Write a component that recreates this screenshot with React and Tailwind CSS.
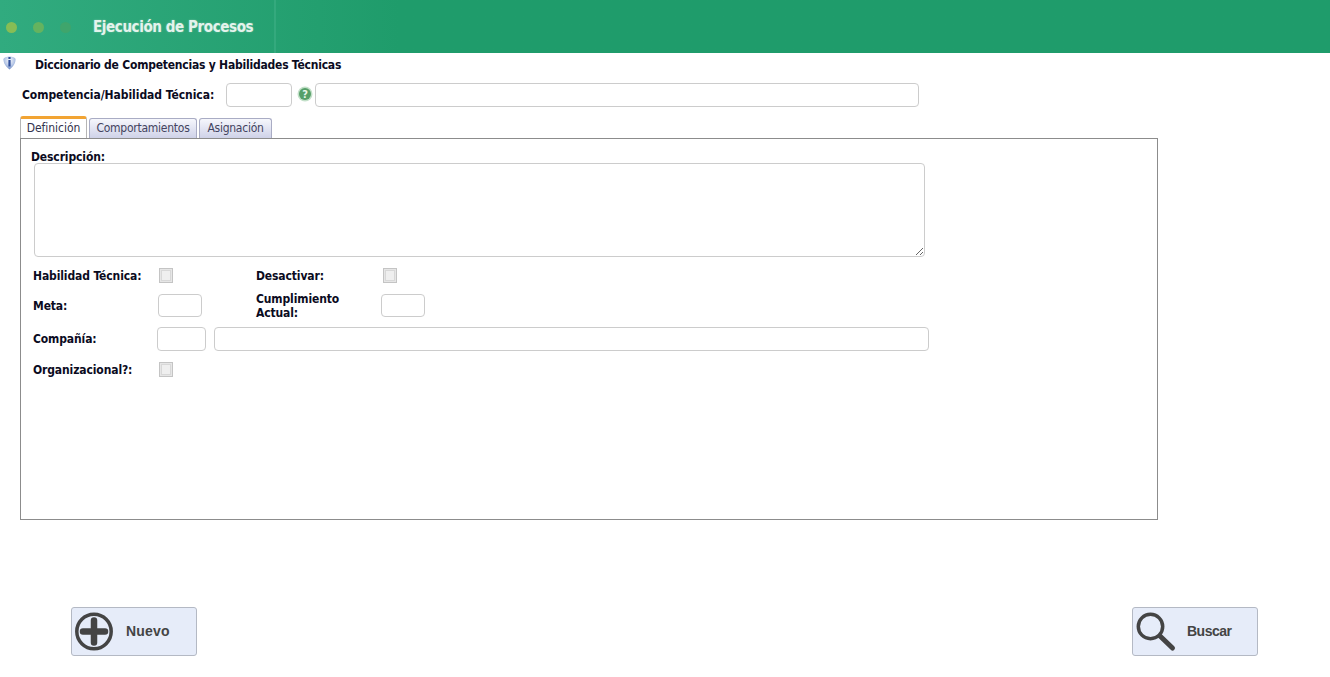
import React from "react";

function Field({ className = "" }) {
  return <div className={`h-6 rounded-[4px] border border-[#cccccc] bg-white shrink-0 ${className}`} />;
}

function Check({ className = "" }) {
  return (
    <div className={`w-[14px] h-[15px] border border-[#c4c4c4] bg-[#e6e6e6] p-[1px] shrink-0 ${className}`}>
      <div className="w-full h-full border border-[#d8d8d8] bg-[#efefef]" />
    </div>
  );
}

function Label({ className = "", children }) {
  return <div className={`text-[12px] leading-[14px] font-bold tracking-[-0.12px] text-[#0b0b1e] shrink-0 ${className}`}>{children}</div>;
}

function Tab({ active, className = "", children }) {
  return active ? (
    <div className={`h-[22px] relative border-x border-x-[#b5b5b5] border-t-[3px] border-t-[#f2a433] rounded-t-[3px] bg-white flex items-center justify-center pb-px text-[12px] tracking-[-0.05px] text-[#33334d] ${className}`}>
      {children}
    </div>
  ) : (
    <div className={`h-[20px] border border-[#a9acc4] border-b-0 rounded-t-[3px] bg-gradient-to-b from-[#f6f7fc] to-[#cfd2e8] flex items-center justify-center pb-[2px] text-[12px] tracking-[-0.25px] text-[#444460] ${className}`}>
      {children}
    </div>
  );
}

function ActionButton({ icon, label, labelClass = "" }) {
  return (
    <button className="w-[126px] h-[49px] rounded-[3px] border border-[#b4b9c4] bg-[#e6ecf9] flex items-center pl-[3px]">
      {icon}
      <span className={`text-[14px] font-bold font-['Liberation_Sans',sans-serif] text-[#444444] ${labelClass}`}>{label}</span>
    </button>
  );
}

export default function App() {
  return (
    <div className="w-[1330px] h-[677px] overflow-hidden bg-white font-['DejaVu_Sans_Condensed','Liberation_Sans',sans-serif]">
      <header className="h-[53px] bg-gradient-to-r from-[#31ab7f] via-[#1f9c6b] via-30% to-[#1f9c6b] flex">
        <div className="w-[276px] border-r-2 border-r-[#34a97d] flex items-center pl-[6px] pt-[2px]">
          <span className="w-[11px] h-[11px] rounded-full bg-[#86bd55]" />
          <span className="w-[11px] h-[11px] rounded-full bg-[#65b35f] ml-[16px]" />
          <span className="w-[11px] h-[11px] rounded-full bg-[#3fa56c] ml-[16px]" />
          <span className="ml-[22px] text-[15px] font-bold tracking-[-0.4px] text-[#e4f3ec] [text-shadow:0_0_2px_rgba(255,255,255,0.35)]">Ejecución de Procesos</span>
        </div>
      </header>

      <div className="h-[23px] flex items-center pl-[2px]">
        <svg width="15" height="14" viewBox="0 0 15 14" className="-mt-[4px]">
          <defs>
            <radialGradient id="ig" cx="50%" cy="30%" r="70%">
              <stop offset="0%" stopColor="#f5f7fc" />
              <stop offset="60%" stopColor="#b5c6e6" />
              <stop offset="100%" stopColor="#6484c2" />
            </radialGradient>
          </defs>
          <path d="M1.5 3.5 C1.5 8 4.5 11 7.5 13.5 C10.5 11 13.5 8 13.5 3.5 C13.5 1.5 10.5 0.5 7.5 0.5 C4.5 0.5 1.5 1.5 1.5 3.5Z" fill="url(#ig)" />
          <rect x="6.4" y="1" width="2.2" height="2" fill="#2f4f9a" />
          <rect x="6.4" y="4" width="2.2" height="6.5" fill="#2f4f9a" />
        </svg>
        <span className="ml-[18px] text-[12px] font-bold tracking-[-0.22px] text-[#0b0b1e]">Diccionario de Competencias y Habilidades Técnicas</span>
      </div>

      <div className="h-6 mt-[7px] flex items-center pl-[22px]">
        <Label className="w-[204px] !tracking-[-0.05px]">Competencia/Habilidad Técnica:</Label>
        <Field className="w-[66px]" />
        <svg width="16" height="16" viewBox="0 0 16 16" className="ml-[5px] -mt-[3px]">
          <circle cx="8" cy="8" r="7.5" fill="#c3e0c9" />
          <circle cx="8" cy="8" r="6" fill="#569f68" />
          <text x="8" y="12" textAnchor="middle" fontSize="11" fontWeight="700" fill="#e8f5ea">?</text>
        </svg>
        <Field className="w-[604px] ml-[2px]" />
      </div>

      <div className="pl-5 w-[1158px] mt-[9px]">
        <div className="flex items-end h-[22px] gap-[2px]">
          <Tab active className="w-[67px]">Definición</Tab>
          <Tab className="w-[108px]">Comportamientos</Tab>
          <Tab className="w-[73px]">Asignación</Tab>
        </div>
        <div className="h-[382px] border border-[#8c8c8c] pt-[11px] pl-[10px]">
          <Label>Descripción:</Label>
          <textarea className="block ml-[3px] -mt-px w-[891px] h-[94px] rounded-[4px] border border-[#cccccc] outline-none bg-white" />

          <div className="flex items-center mt-[11px] pl-[2px] h-[15px]">
            <Label className="w-[126px]">Habilidad Técnica:</Label>
            <Check />
            <Label className="ml-[83px] w-[127px]">Desactivar:</Label>
            <Check />
          </div>

          <div className="flex items-center mt-[10px] pl-[2px] h-6">
            <Label className="w-[125px] pt-[2px]">Meta:</Label>
            <Field className="w-[44px] !h-[23px]" />
            <Label className="ml-[54px] w-[125px] pt-[2px]">Cumplimiento<br />Actual:</Label>
            <Field className="w-[44px] !h-[23px]" />
          </div>

          <div className="flex items-center mt-[10px] pl-[2px] h-6">
            <Label className="w-[124px]">Compañía:</Label>
            <Field className="w-[49px]" />
            <Field className="w-[715px] ml-[8px]" />
          </div>

          <div className="flex items-center mt-[11px] pl-[2px] h-[15px]">
            <Label className="w-[126px]">Organizacional?:</Label>
            <Check />
          </div>
        </div>
      </div>

      <div className="flex justify-between pl-[71px] pr-[72px] mt-[87px]">
        <ActionButton
          label="Nuevo"
          labelClass="tracking-[0.2px]"
          icon={
            <svg width="42" height="42" viewBox="0 0 42 42" className="mr-[9px]">
              <circle cx="19" cy="20.5" r="17.2" fill="none" stroke="#444444" strokeWidth="3.5" />
              <path d="M19 9.5 V31.5 M8 20.5 H30" stroke="#444444" strokeWidth="6.5" strokeLinecap="round" />
            </svg>
          }
        />
        <ActionButton
          label="Buscar"
          labelClass="tracking-[-0.5px]"
          icon={
            <svg width="44" height="44" viewBox="0 0 44 44" className="mr-[7px]">
              <circle cx="14.5" cy="16.5" r="12.2" fill="none" stroke="#444444" strokeWidth="3.5" />
              <path d="M24 26 L36.5 38" stroke="#444444" strokeWidth="5" strokeLinecap="round" />
            </svg>
          }
        />
      </div>
    </div>
  );
}
